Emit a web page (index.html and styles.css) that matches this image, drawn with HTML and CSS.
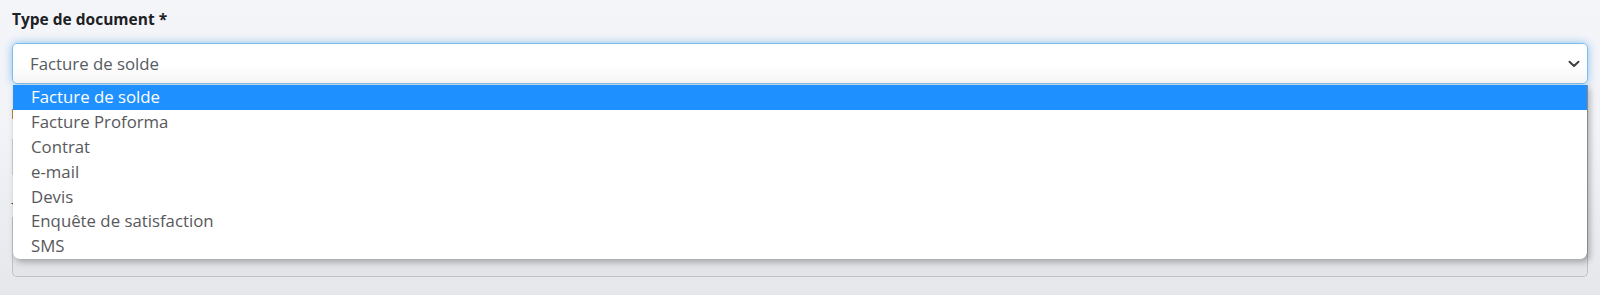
FILE: index.html
```html
<!DOCTYPE html>
<html lang="fr">
<head>
<meta charset="utf-8">
<title>Type de document</title>
<link rel="stylesheet" href="styles.css">
</head>
<body>
<div class="page">
  <div class="field">
    <label class="label">Type de document *</label>
    <div class="select-wrap">
      <div class="select">
        <span class="select-value">Facture de solde</span>
        <svg class="chevron" width="12" height="8" viewBox="0 0 12 8"><path d="M1.5 1.8 L6 6 L10.5 1.8" fill="none" stroke="#3a3f44" stroke-width="2" stroke-linecap="round" stroke-linejoin="round"/></svg>
      </div>
      <ul class="dropdown">
        <li class="option selected">Facture de solde</li>
        <li class="option">Facture Proforma</li>
        <li class="option">Contrat</li>
        <li class="option">e-mail</li>
        <li class="option">Devis</li>
        <li class="option">Enquête de satisfaction</li>
        <li class="option">SMS</li>
      </ul>
    </div>
  </div>
  <div class="behind">
    <div class="alert-edge"></div>
    <div class="ghost-input"></div>
    <div class="dash">-</div>
    <div class="ghost-area"></div>
  </div>
</div>
</body>
</html>
```
FILE: styles.css
```css
html, body {
  margin: 0;
  padding: 0;
}
body {
  width: 1600px;
  height: 295px;
  overflow: hidden;
  background: linear-gradient(#f4f5f9 0%, #f2f3f7 45%, #e6e7eb 100%);
  font-family: "Open Sans", "Noto Sans", "Liberation Sans", sans-serif;
  color: #212529;
}
.page {
  padding: 0 12px;
}
.field {
  padding-top: 9px;
}
.label {
  display: block;
  font-weight: 700;
  font-size: 15.5px;
  line-height: 21px;
  color: #1d2125;
  margin-bottom: 13px;
}
.select-wrap {
  position: relative;
  z-index: 2;
}
.select {
  height: 39px;
  box-sizing: content-box;
  border: 1px solid #7dbcef;
  border-radius: 5px;
  background: linear-gradient(#ffffff 55%, #f4f4f4 100%);
  box-shadow: 0 0 8px rgba(102, 175, 233, 0.75);
  display: flex;
  align-items: center;
  justify-content: space-between;
  padding: 0 7px 0 17px;
}
.select-value {
  font-size: 16.8px;
  color: #555b60;
}
.chevron {
  display: block;
}
.dropdown {
  position: absolute;
  top: 42px;
  left: 1px;
  right: 0;
  margin: 0;
  padding: 0;
  list-style: none;
  background: #fff;
  border-radius: 0 0 7px 7px;
  border-right: 1px solid #8a8a8a;
  box-shadow: 2px 3px 6px rgba(0, 0, 0, 0.28);
  overflow: hidden;
}
.option {
  height: 24.9px;
  line-height: 24.9px;
  padding-left: 18px;
  font-size: 16.8px;
  color: #58585b;
}
.option.selected {
  background: #1e90ff;
  color: #fff;
}
.behind {
  position: relative;
  z-index: 1;
  padding-top: 25px;
}
.alert-edge {
  width: 2px;
  height: 10px;
  background: #b48a3c;
}
.ghost-input {
  margin-top: 20px;
  height: 36px;
  border-left: 1px solid #cfd1d5;
}
.dash {
  font-size: 14px;
  line-height: 16px;
  margin-top: 20px;
  margin-left: -1px;
  color: #333;
}
.ghost-area {
  margin-top: 6px;
  height: 59px;
  border: 1px solid #bfc1c6;
  border-top: none;
  border-radius: 0 0 5px 5px;
  background: linear-gradient(#d9dade, #e4e5e9);
}
```
